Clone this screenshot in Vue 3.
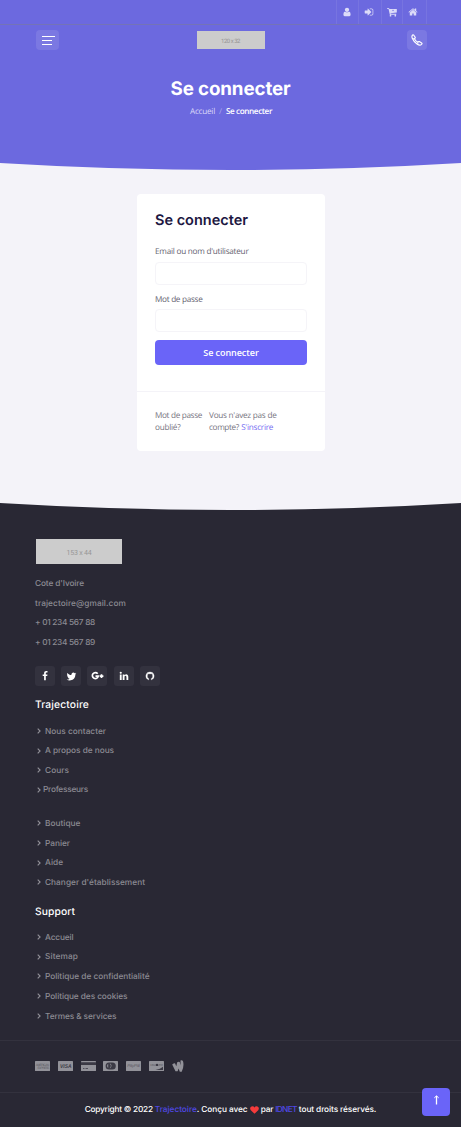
<script setup>
// Spreads the letters of a label so that it fills the given width.
const vFit = {
  mounted(el, { value }) {
    const natural = el.getBoundingClientRect().width
    el.style.letterSpacing = `${(value - natural) / el.textContent.length}px`
  }
}

const topIcons = [
  { name: 'user', w: 22, d: 'M1536 1399q0 109-62.500 187t-150.500 78h-854q-88 0-150.500-78t-62.500-187q0-85 8.500-160.500t31.500-152 58.500-131 94-89 134.500-34.500q131 128 313 128t313-128q76 0 134.500 34.500t94 89 58.500 131 31.500 152 8.500 160.500zm-256-887q0 159-112.500 271.500t-271.500 112.500-271.500-112.500-112.500-271.500 112.500-271.500 271.500-112.500 271.500 112.500 112.500 271.500z' },
  { name: 'login', w: 23, d: 'M1312 896q0 26-19 45l-544 544q-19 19-45 19t-45-19-19-45v-288h-448q-26 0-45-19t-19-45v-384q0-26 19-45t45-19h448v-288q0-26 19-45t45-19 45 19l544 544q19 19 19 45zm352-352v704q0 119-84.500 203.500t-203.500 84.500h-320q-13 0-22.500-9.500t-9.500-22.500q0-4-1-20t-.5-26.500 3-23.500 10-19.500 20.500-6.500h320q66 0 113-47t47-113v-704q0-66-47-113t-113-47h-312l-11.500-1-11.500-3-8-5.500-7-9-2-13.500q0-4-1-20t-.5-26.500 3-23.500 10-19.500 20.500-6.500h320q119 0 203.500 84.500t84.500 203.500z' },
  { name: 'cart', w: 21, d: 'M0 160h370l45 190h1345v620l-1130 150 20 100h1000v160h-1140l-240-1060h-270zM480 1560a150 150 0 1 0 300 0a150 150 0 1 0-300 0zM1340 1560a150 150 0 1 0 300 0a150 150 0 1 0-300 0zM1020 500v100h-110l170 180 170-180h-110v-100z' },
  { name: 'home', w: 23, d: 'M1472 992v480q0 26-19 45t-45 19h-384v-384h-256v384h-384q-26 0-45-19t-19-45v-480q0-1 .5-3t.5-3l575-474 575 474q1 2 1 6zm223-69l-62 74q-8 9-21 11h-3q-13 0-21-7l-692-577-692 577q-12 8-24 7-13-2-21-11l-62-74q-8-10-7-23.500t11-21.500l719-599q32-26 76-26t76 26l244 204v-195q0-14 9-23t23-9h192q14 0 23 9t9 23v408l219 182q10 8 11 21.500t-7 23.500z' }
]

const contacts = [
  { t: "Cote d'Ivoire", w: 49 },
  { t: 'trajectoire@gmail.com', w: 91 },
  { t: '+ 01 234 567 88', w: 60 },
  { t: '+ 01 234 567 89', w: 60 }
]

const company = [
  { t: 'Nous contacter', w: 61 },
  { t: 'A propos de nous', w: 69 },
  { t: 'Cours', w: 24 },
  { t: 'Professeurs', w: 45, tight: true }
]
const shop = [
  { t: 'Boutique', w: 35.5 },
  { t: 'Panier', w: 25 },
  { t: 'Aide', w: 18 },
  { t: "Changer d'établissement", w: 100 }
]
const support = [
  { t: 'Accueil', w: 28.5 },
  { t: 'Sitemap', w: 33 },
  { t: 'Politique de confidentialité', w: 104.5 },
  { t: 'Politique des cookies', w: 82.5 },
  { t: 'Termes & services', w: 71.5 }
]
const groups = [
  { cls: 'company', items: company },
  { cls: 'shop', items: shop }
]
</script>

<template>
  <div class="page">
    <header class="hero">
      <div class="topbar">
        <a v-for="i in topIcons" :key="i.name" class="top-link" :class="i.name" :style="{ width: i.w + 'px' }">
          <svg width="10" height="10" viewBox="0 0 1792 1792"><path :d="i.d" fill="#dcdbf8" fill-rule="evenodd" /></svg>
        </a>
      </div>
      <nav class="navbar">
        <button class="square menu"><i></i><i></i><i></i></button>
        <div class="logo small"><span v-fit="19">120 x 32</span></div>
        <button class="square phone">
          <svg width="12" height="12" viewBox="0 0 12 12" fill="none" stroke="#fff" stroke-width="1.150" stroke-linejoin="round">
            <path d="M1.200 1.500Q2 .4 2.800 1.200L4.200 3.300Q4.500 4.100 3.400 4.700Q4.600 7 6.800 8.200Q7.400 7.200 8.300 7.600L10.600 8.900Q11.500 9.500 10.600 10.400Q9 11.900 6.300 10.300Q3 8.200 1.400 4.500Q.6 2.700 1.200 1.500ZM3.400 4.700L2 4.700M6.800 8.200L7 9.600" />
          </svg>
        </button>
      </nav>
      <h1><span v-fit="120">Se connecter</span></h1>
      <div class="crumbs">
        <span v-fit="25" class="dim">Accueil</span><span class="slash">/</span><span v-fit="46" class="here">Se connecter</span>
      </div>
    </header>
    <svg class="curve" width="461" height="8" viewBox="0 0 461 8" preserveAspectRatio="none">
      <path d="M0 0H461Q230.500 14 0 0Z" fill="#6c69df" />
    </svg>

    <main>
      <section class="card">
        <div class="form">
          <h2><span v-fit="93">Se connecter</span></h2>
          <label><span v-fit="93.5">Email ou nom d'utilisateur</span></label>
          <input type="text" />
          <label class="second"><span v-fit="47.5">Mot de passe</span></label>
          <input type="password" />
          <button class="submit"><span v-fit="55.5">Se connecter</span></button>
        </div>
        <div class="below">
          <p class="forgot"><span v-fit="47">Mot de passe</span><br /><span v-fit="25.5">oublié?</span></p>
          <p class="signup"><span v-fit="67.5">Vous n'avez pas de</span><br /><span v-fit="30">compte?</span> <a><span v-fit="32">S'inscrire</span></a></p>
        </div>
      </section>
    </main>

    <footer>
      <svg class="curve" width="461" height="8" viewBox="0 0 461 8" preserveAspectRatio="none">
        <path d="M0 0H461Q230.500 14 0 0Z" fill="#f4f3f9" />
      </svg>
      <div class="foot-body">
        <div class="logo big"><span v-fit="25">153 x 44</span></div>
        <ul class="contacts">
          <li v-for="c in contacts" :key="c.t"><span v-fit="c.w">{{ c.t }}</span></li>
        </ul>
        <div class="socials">
          <a><svg width="10" height="10" viewBox="0 0 1792 1792"><path d="M1343 12v264h-157q-86 0-116 36t-30 108v189h293l-39 296h-254v759h-306v-759h-255v-296h255v-218q0-186 104-288.500t277-102.500q147 0 228 12z" fill="#fff" /></svg></a>
          <a><svg width="11" height="11" viewBox="0 0 1792 1792"><path d="M1684 408q-67 98-162 167 1 14 1 42 0 130-38 259.500t-115.500 248.500-184.500 210.500-258 146-323 54.500q-271 0-496-145 35 4 78 4 225 0 401-138-105-2-188-64.500t-114-159.500q33 5 61 5 43 0 85-11-112-23-185.500-111.500t-73.500-205.500v-4q68 38 146 41-66-44-105-115t-39-154q0-88 44-163 121 149 294.500 238.500t371.500 99.500q-8-38-8-74 0-134 94.500-228.500t228.500-94.500q140 0 236 102 109-21 205-78-37 115-142 178 93-10 186-50z" fill="#fff" /></svg></a>
          <a><svg width="13" height="10" viewBox="0 0 13 10" fill="none" stroke="#fff" stroke-width="1.700"><path d="M6.700 2.700A3 3 0 1 0 7.300 5.200H4.500M10.500 3.300V7M8.700 5.100H12.400" /></svg></a>
          <a><svg width="10" height="10" viewBox="0 0 1792 1792"><path d="M477 625v991h-330v-991h330zm21-306q1 73-50.500 122t-135.500 49h-2q-82 0-132-49t-50-122q0-74 51.500-122.500t134.500-48.500 133 48.500 51 122.500zm1166 729v568h-329v-530q0-105-40.500-164.500t-126.500-59.500q-63 0-105.500 34.500t-63.500 85.500q-11 30-11 81v553h-329q2-399 2-647t-1-296l-1-48h329v144h-2q20-32 41-56t56.500-52 87-43.500 114.500-15.500q171 0 275 113.500t104 332.500z" fill="#fff" /></svg></a>
          <a><svg width="10" height="10" viewBox="0 0 10 10"><path d="M5 .9A4.100 4.100 0 0 0 3.700 8.900V7.400Q2.300 7 2.300 5.200Q2.300 4.300 2.700 3.700L2.600 2.400L3.900 2.900Q5 2.700 6.100 2.900L7.400 2.400L7.300 3.700Q7.700 4.300 7.700 5.200Q7.700 7 6.300 7.400V8.900A4.100 4.100 0 0 0 5 .9Z" fill="#fff" stroke="#fff" stroke-width=".3" /></svg></a>
        </div>
        <h3><span v-fit="54">Trajectoire</span></h3>
        <ul v-for="g in groups" :key="g.cls" class="links" :class="g.cls">
          <li v-for="l in g.items" :key="l.t" :class="{ tight: l.tight }">
            <svg width="4" height="6" viewBox="0 0 4 6"><path d="M.7.6L3.100 3L.7 5.400" fill="none" stroke="#929198" stroke-width="1.100" /></svg><span v-fit="l.w">{{ l.t }}</span>
          </li>
        </ul>
        <h3 class="support-title"><span v-fit="40">Support</span></h3>
        <ul class="links support">
          <li v-for="l in support" :key="l.t">
            <svg width="4" height="6" viewBox="0 0 4 6"><path d="M.7.6L3.100 3L.7 5.400" fill="none" stroke="#929198" stroke-width="1.100" /></svg><span v-fit="l.w">{{ l.t }}</span>
          </li>
        </ul>
      </div>
      <div class="payments">
        <svg width="15" height="10" viewBox="0 0 15 10"><rect width="15" height="10" rx=".6" /><g class="ink soft"><text x=".8" y="4.800" font-size="3.300" textLength="13.400">AMERICAN</text><text x="2.500" y="8" font-size="3.300" textLength="11.700">EXPRESS</text></g></svg>
        <svg width="15" height="10" viewBox="0 0 15 10"><rect width="15" height="10" rx=".6" /><text class="ink strong" x="2" y="7.100" font-size="5.500" textLength="11.500" lengthAdjust="spacingAndGlyphs">VISA</text></svg>
        <svg width="15" height="10" viewBox="0 0 15 10"><rect width="15" height="10" rx=".6" /><path class="ink" d="M0 1.200H15V4H0ZM2 7.200H3.500V8H2ZM4.500 7.200H7V8H4.500Z" /></svg>
        <svg width="15" height="10" viewBox="0 0 15 10"><rect width="15" height="10" rx=".6" /><rect class="ink" x="2.600" y="1.400" width="10.200" height="7" rx="3.500" /><path d="M5.200 2.700Q3 4.800 5.200 7ZM6.900 2.300Q10.200 4.800 6.900 7.400V6.800Q8.800 4.800 6.900 3Z" /></svg>
        <svg width="15" height="10" viewBox="0 0 15 10"><rect width="15" height="10" rx=".6" /><text class="ink soft" x="1.200" y="6.200" font-size="4.500" font-style="italic" textLength="12.600">PayPal</text></svg>
        <svg width="15" height="10" viewBox="0 0 15 10"><rect width="15" height="10" rx=".6" /><text class="ink soft" x="1.200" y="5" font-size="3" textLength="12.600">DISCOVER</text><circle class="ink" cx="8" cy="3.900" r="1.200" /><path class="ink" d="M14 5.700V9H6.500Q11.500 8 14 5.700Z" /></svg>
        <svg class="wallet" width="12" height="12" viewBox="0 0 12 12"><path d="M.2 4.500Q2 2.900 3 3.200L4.300 6.300L5.200 2.200Q6.600 1.300 7.700 2.100L8.600 5.200L8.500.4Q10.500-.1 11.100 1.500Q12.300 6.500 9.700 11.700H7.800L6.600 8.600L5.600 11.200H3.500Z" /></svg>
      </div>
      <div class="copyright">
        <span v-fit="70">Copyright © 2022 </span><a v-fit="42">Trajectoire</a><span v-fit="53">. Conçu avec </span><svg width="9" height="8" viewBox="0 0 9 8"><path d="M4.500 7.800L.8 4.200C-.8 2.200.8.2 2.500.3Q3.800.4 4.500 1.500Q5.200.4 6.500.3C8.200.2 9.800 2.200 8.200 4.200Z" fill="#f63b3b" /></svg><span v-fit="16.5">&nbsp;par </span><a v-fit="21.5">IDNET</a><span v-fit="79.5">&nbsp;tout droits réservés.</span>
      </div>
      <button class="to-top">
        <svg width="7" height="10" viewBox="0 0 7 10" fill="none" stroke="#fff"><path d="M3.500 9.500V1" stroke-width="1.300" /><path d="M1.300 2.900L3.500.9L5.700 2.900" stroke-width="1" /></svg>
      </button>
    </footer>
  </div>
</template>

<style>
body { background: #292834; }
</style>

<style scoped>
* { box-sizing: border-box; margin: 0; padding: 0; }
.page {
  width: 461px; height: 1127px; overflow: hidden; position: relative;
  background: #f4f3f9;
  font-family: Inter, "Open Sans", sans-serif;
  text-rendering: geometricPrecision;
}
span, .copyright a { white-space: pre; }
button, input { border: 0; font: inherit; }
ul { list-style: none; }
svg { display: block; flex: none; }
.hero { height: 163px; background: #6c69df; }
.topbar { height: 25px; display: flex; justify-content: flex-end; padding-right: 34px; border-bottom: 1px solid #7473b6; }
.top-link { display: flex; align-items: center; justify-content: center; border-left: 1px solid #7774e0; }
.top-link.user svg, .top-link.login svg { margin-right: 2px; }
.top-link:last-child { box-sizing: content-box; border-right: 1px solid #7774e0; }
.top-link:last-child svg { margin-right: 3px; }
.navbar { height: 30px; display: flex; align-items: center; justify-content: space-between; padding: 0 34px 0 36px; }
.square { height: 20px; border-radius: 4px; background: #7b78e2; }
.menu { width: 23px; display: flex; flex-direction: column; gap: 3px; padding: 6px 0 0 6px; }
.menu i { width: 10px; height: 1px; background: #fff; }
.menu i:first-child { width: 13px; }
.phone { width: 20px; display: flex; align-items: center; justify-content: center; }
.logo { background: #ccc; color: #969696; display: flex; align-items: center; justify-content: center; font-family: Roboto, sans-serif; }
.small { width: 68px; height: 18px; font-size: 6px; margin-right: 5px; padding-top: 2px; }
h1 { margin-top: 21px; height: 25px; line-height: 25px; text-align: center; color: #fff; font-size: 18.8px; font-weight: 700; }
.crumbs { height: 20px; margin-top: 1px; display: flex; justify-content: center; align-items: center; padding-left: 1px; font: 8.2px/20px "Open Sans", sans-serif; color: #fff; }
.crumbs .dim { color: #d9d8f8; }
.crumbs .here { font-weight: 600; }
.slash { width: 11px; text-align: center; color: #aaa8ee; }
main { height: 332px; padding-top: 23px; }
.card { width: 188px; height: 257px; margin: 0 auto 0 137px; background: #fff; border-radius: 4px; }
.form { height: 198px; padding: 17px 18px 0; border-bottom: 1px solid #f4f3f8; }
h2 { height: 20px; line-height: 20px; font-size: 14.5px; font-weight: 600; color: #1d1742; }
label, .below { font: 8.2px/12px "Open Sans", sans-serif; color: #656371; }
label { display: block; height: 12px; }
label.second { line-height: 14px; }
h2 + label { margin-top: 15px; }
input { display: block; width: 152px; height: 23px; border: 1px solid #f5f4f8; border-radius: 4px; background: #fff; margin: 4px 0 8px; }
.submit { display: block; width: 152px; height: 25px; border-radius: 4px; background: #6a64f8; color: #fff; font: 600 9px/24px "Open Sans", sans-serif; }
.below { display: flex; padding: 18px 18px 0; color: #77757f; }
.forgot { width: 54px; }
.below a { color: #756df2; }
footer { background: #292834; height: 624px; position: relative; }
.foot-body { height: 529px; padding: 28px 35px 0; }
.big { width: 86px; height: 25px; margin-left: 1px; font-size: 7px; padding-top: 2px; }
.contacts { margin-top: 11px; }
li { height: 19.7px; line-height: 19.7px; font-size: 8.3px; font-weight: 500; color: #8b8a92; }
.socials { display: flex; gap: 6.2px; margin-top: 12.5px; }
.socials a { width: 20px; height: 20px; border-radius: 3px; background: #33323e; display: flex; align-items: center; justify-content: center; }
h3 { margin-top: 11px; height: 16px; line-height: 16px; font-size: 10.3px; font-weight: 500; color: #fff; }
.links { margin-top: 9.5px; }
.links li { display: flex; align-items: center; gap: 4px; padding-left: 2px; height: 19.6px; }
.links li svg { margin-bottom: 3px; }
.links li.tight { gap: 2px; }
.links.shop { margin-top: 14px; }
h3.support-title { margin-top: 10px; }
.links.support { margin-top: 9px; }
.links.support li { height: 19.8px; }
.payments { height: 53px; display: flex; align-items: center; gap: 7.8px; padding: 0 0 1px 35px; border-top: 1px solid #33323e; border-bottom: 1px solid #33323e; }
.payments svg { fill: #929299; font-family: "Liberation Sans", sans-serif; }
.payments .ink { fill: #3b3a45; }
.payments .soft { fill: #5c5b64; }
.payments .strong { font-weight: 700; font-style: italic; }
.copyright { height: 34px; display: flex; align-items: center; justify-content: center; font-size: 8.3px; font-weight: 500; color: #fff; }
.copyright a { color: #5048e5; }
.to-top { position: absolute; right: 11px; bottom: 11px; width: 28px; height: 28px; border-radius: 4px; background: #6a64f8; display: flex; justify-content: center; padding-top: 7px; }
</style>
